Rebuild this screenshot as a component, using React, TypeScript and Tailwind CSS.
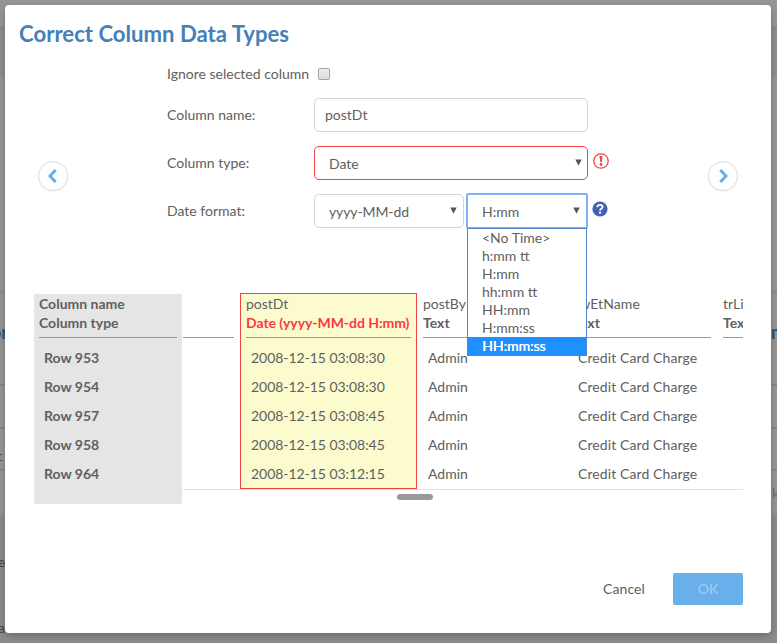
import React from "react";

const rows = [
  ["Row 953", "2008-12-15 03:08:30"],
  ["Row 954", "2008-12-15 03:08:30"],
  ["Row 957", "2008-12-15 03:08:45"],
  ["Row 958", "2008-12-15 03:08:45"],
  ["Row 964", "2008-12-15 03:12:15"],
];

const timeFormats = ["<No Time>", "h:mm tt", "H:mm", "hh:mm tt", "HH:mm", "H:mm:ss", "HH:mm:ss"];

function Arrow() {
  return (
    <svg width="7" height="7" viewBox="0 0 7 7" className="-mt-px shrink-0">
      <path d="M0.3 0.5H6.7L3.5 6.8Z" fill="#555" />
    </svg>
  );
}

function NavButton({ dir }: { dir: "left" | "right" }) {
  return (
    <button className="mt-[104px] flex h-[30px] w-[30px] shrink-0 items-center justify-center rounded-full border border-[#dedede] bg-white shadow-[0_1px_2px_rgba(0,0,0,0.06)]">
      <svg width="14" height="14" viewBox="0 0 14 14" fill="none" stroke="#66afe9" strokeWidth="3">
        <path d={dir === "left" ? "M9.7 1L4 7L9.7 13" : "M4.3 1L10 7L4.3 13"} />
      </svg>
    </button>
  );
}

function FieldRow({ label, children }: { label: string; children: React.ReactNode }) {
  return (
    <div className="flex h-[34px] items-center">
      <label className="w-[147px] shrink-0 pb-[2px]">{label}</label>
      {children}
    </div>
  );
}

function Column({
  name,
  type,
  cells,
  className,
  typeClass = "font-bold",
}: {
  name: string;
  type: string;
  cells: string[];
  className: string;
  typeClass?: string;
}) {
  return (
    <div className={"shrink-0 whitespace-nowrap " + className}>
      <div className="h-[44px] border-b border-[#999] leading-[19px]">
        <div className="h-[19px]">{name}</div>
        <div className={"h-[19px] " + typeClass}>{type}</div>
      </div>
      <div className="pt-[5px] pl-[5px]">
        {cells.map((c, i) => (
          <div key={i} className="h-[29px] leading-[29px]">
            {c}
          </div>
        ))}
      </div>
    </div>
  );
}

function Backdrop() {
  return (
    <div className="h-full w-full bg-[#979797] text-[14px] text-[#444]">
      <div className="h-[28px] border-b border-[#888]" />
      <div className="h-[49px] bg-[#8f8f8f]" />
      <div className="h-[215px] border-b border-[#888]" />
      <div className="flex h-[94px] justify-between overflow-hidden border-b-2 border-[#858585] pt-[27px] text-[18px] font-bold text-[#285578]">
        <span className="-ml-[9px]">or</span>
        <span className="-mr-[9px]">m</span>
      </div>
      <div className="h-[43px] border-b-2 border-[#858585]" />
      <div className="h-[41px] border-b border-[#808080] pt-[16px]">
        <span className="-ml-[3px]">t</span>
      </div>
      <div className="flex h-[45px] justify-end overflow-hidden pt-[12px] text-[#707070]">
        <span className="-mr-[2px]">k</span>
      </div>
      <div className="h-[128px] bg-[#8d8d8d] pt-[36px]">
        <div className="-ml-[2px] h-[66px]">e</div>
        <div className="-ml-[2px]">a</div>
      </div>
    </div>
  );
}

export default function App() {
  return (
    <div className="relative h-[643px] w-[777px] overflow-hidden font-['Lato',sans-serif] text-[14px] text-[#606060]">
      <Backdrop />
      <div className="absolute top-[5px] left-[5px] flex h-[628px] w-[766px] flex-col rounded-[4px] bg-white shadow-[0_3px_8px_rgba(0,0,0,0.25)]">
        <h1 className="h-[52px] pt-[14px] pl-[14px] text-[22.15px] leading-[30px] font-bold text-[#4580b8]">
          Correct Column Data Types
        </h1>
        <div className="flex h-[236px] px-[33px]">
          <NavButton dir="left" />
          <div className="mr-[96px] ml-[99px] w-[445px]">
            <div className="mb-[7px] flex h-[34px] items-center">
              <label className="pb-[2px]">Ignore selected column</label>
              <span className="ml-[9px] h-[12px] w-[12px] rounded-[2px] border border-[#a5a5a5] bg-linear-to-b from-[#ececec] to-[#dcdcdc]" />
            </div>
            <div className="flex flex-col gap-[14px]">
              <FieldRow label="Column name:">
                <div className="flex h-[34px] w-[274px] shrink-0 items-center rounded-[5px] border border-[#d5d5d5] px-[10px] pb-[2px]">postDt</div>
              </FieldRow>
              <FieldRow label="Column type:">
                <div className="flex h-[34px] w-[274px] shrink-0 items-center justify-between rounded-[5px] border border-[#f24343] pr-[5px] pl-[14px]">
                  <span>Date</span>
                  <Arrow />
                </div>
                <svg className="-mt-[4px] ml-[5px] shrink-0" width="16" height="16" viewBox="0 0 16 16">
                  <circle cx="8" cy="8" r="7.2" fill="none" stroke="#f24343" strokeWidth="1.3" />
                  <path d="M6.5 3H9.5L8.8 9.2H7.2Z" fill="#f24343" />
                  <circle cx="8" cy="11.5" r="1.4" fill="#f24343" />
                </svg>
              </FieldRow>
              <FieldRow label="Date format:">
                <div className="flex h-[34px] w-[150px] shrink-0 items-center justify-between rounded-[5px] border border-[#d5d5d5] pr-[6px] pl-[14px]">
                  <span className="tracking-[-0.1px]">yyyy-MM-dd</span>
                  <Arrow />
                </div>
                <div className="relative ml-[2px] shrink-0">
                  <div className="flex h-[36px] w-[122px] items-center justify-between rounded-[2px] border-2 border-[#82b0f5] pr-[6px] pl-[14px]">
                    <span>H:mm</span>
                    <Arrow />
                  </div>
                  <ul className="absolute top-[35px] left-px z-10 w-[120px] border border-[#5584cc] bg-white">
                    {timeFormats.map((f) => (
                      <li
                        key={f}
                        className={
                          "h-[18px] pl-[14px] leading-[18px] " +
                          (f === "HH:mm:ss" ? "bg-[#1e90ff] text-white [text-shadow:0.4px_0_0_#fff]" : "")
                        }
                      >
                        {f}
                      </li>
                    ))}
                  </ul>
                </div>
                <svg className="-mt-[4px] ml-[4px] shrink-0" width="16" height="16" viewBox="0 0 16 16">
                  <circle cx="8" cy="8" r="7.6" fill="#4064b2" />
                  <path d="M5.3 6.1C5.4 4.5 6.5 3.8 8 3.8C9.6 3.8 10.6 4.7 10.6 5.9C10.6 7.6 8.1 7.5 8.1 9.6" fill="none" stroke="#fff" strokeWidth="1.8" />
                  <rect x="7.1" y="10.7" width="2" height="2" fill="#fff" />
                </svg>
              </FieldRow>
            </div>
          </div>
          <NavButton dir="right" />
        </div>
        <div className="flex h-[211px] pr-[28px] pl-[29px]">
          <div className="mt-px h-[210px] w-[148px] shrink-0 bg-[#e5e5e5] px-[5px] font-bold">
            <Column name="Column name" type="Column type" cells={rows.map((r) => r[0])} className="w-[138px]" />
          </div>
          <div className="ml-px w-[560px]">
            <div className="flex h-[197px] overflow-hidden border-b border-[#e2e2e2]">
              <Column name="" type="" cells={[]} className="mt-px mr-[6px] w-[51px]" />
              <div className="h-[196px] w-[177px] shrink-0 border border-[#f24343] bg-[#fcfbce] px-[5px]">
                <Column
                  name="postDt"
                  type="Date (yyyy-MM-dd H:mm)"
                  cells={rows.map((r) => r[1])}
                  className="w-[165px] tracking-[-0.05px]"
                  typeClass="font-bold text-[#fb3844]"
                />
              </div>
              <Column name="postBy" type="Text" cells={rows.map(() => "Admin")} className="mt-px ml-[6px] w-[138px]" />
              <Column name="swEtName" type="Text" cells={rows.map(() => "Credit Card Charge")} className="mt-px ml-[12px] w-[138px] tracking-[0.1px]" />
              <Column name="trListID" type="Text" cells={[]} className="mt-px ml-[12px] w-[138px]" />
            </div>
            <div className="mt-[4px] ml-[214px] h-[6px] w-[36px] rounded-full bg-[#999]" />
          </div>
        </div>
        <div className="mt-[69px] flex h-[32px] items-center justify-end pr-[28px]">
          <button className="mr-[28px] pb-[2px] tracking-[0.1px]">Cancel</button>
          <button className="h-[32px] w-[70px] rounded-[2px] bg-[#69afec] pb-[2px] text-[#a9cdec]">OK</button>
        </div>
      </div>
    </div>
  );
}
